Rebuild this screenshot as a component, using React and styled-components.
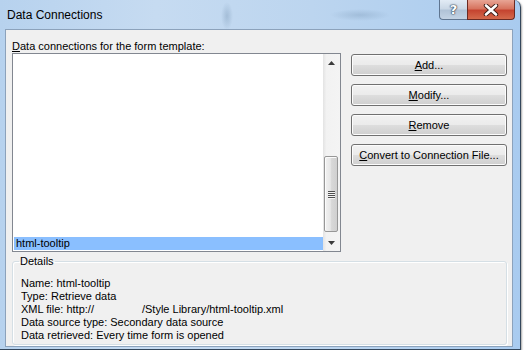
import React from "react"
import styled, { createGlobalStyle } from "styled-components"

const GlobalStyle = createGlobalStyle`
  html, body {
    margin: 0;
    padding: 0;
    background: #ffffff;
  }
  body {
    font-family: "Liberation Sans", Arial, sans-serif;
    font-size: 11px;
    color: #000;
  }
`

const details = [
  "Name: html-tooltip",
  "Type: Retrieve data",
  null,
  "Data source type: Secondary data source",
  "Data retrieved: Every time form is opened",
]

const App = () => {
  return (
    <>
      <GlobalStyle />
      <Window>
        <TitleBar>
          <Title>Data Connections</Title>
          <Blur />
          <CaptionButtons>
            <HelpButton>?</HelpButton>
            <CloseButton>
              <svg width="16" height="12" viewBox="0 0 16 12">
                <path d="M3 1.5 L13 10.5 M13 1.5 L3 10.5" stroke="#3b1a14" strokeWidth="4.4" strokeLinecap="round" />
                <path d="M3 1.5 L13 10.5 M13 1.5 L3 10.5" stroke="#ffffff" strokeWidth="2.6" strokeLinecap="round" />
              </svg>
            </CloseButton>
          </CaptionButtons>
        </TitleBar>

        <Client>
          <TopRow>
            <LeftColumn>
              <Label><u>D</u>ata connections for the form template:</Label>
              <ListBox>
                <Items>
                  <Item selected>html-tooltip</Item>
                </Items>
                <ScrollBar>
                  <ArrowButton>
                    <svg width="7" height="4" viewBox="0 0 7 4">
                      <path d="M0 4 L3.5 0 L7 4 Z" fill="#3c3c3c" />
                    </svg>
                  </ArrowButton>
                  <Track>
                    <Thumb>
                      <Grip>
                        <span /><span /><span /><span />
                      </Grip>
                    </Thumb>
                  </Track>
                  <ArrowButton>
                    <svg width="7" height="4" viewBox="0 0 7 4">
                      <path d="M0 0 L7 0 L3.5 4 Z" fill="#3c3c3c" />
                    </svg>
                  </ArrowButton>
                </ScrollBar>
              </ListBox>
            </LeftColumn>

            <ButtonColumn>
              <Button><u>A</u>dd...</Button>
              <Button><u>M</u>odify...</Button>
              <Button><u>R</u>emove</Button>
              <Button><u>C</u>onvert to Connection File...</Button>
            </ButtonColumn>
          </TopRow>

          <GroupBox>
            <Legend>Details</Legend>
            <DetailText>
              {details.map((line, i) =>
                line ? (
                  <DetailLine key={i}>{line}</DetailLine>
                ) : (
                  <DetailLine key={i}>
                    XML file: http://<Hidden />/Style Library/html-tooltip.xml
                  </DetailLine>
                )
              )}
            </DetailText>
          </GroupBox>
        </Client>
      </Window>
    </>
  )
}

export default App

const Window = styled.div`
  box-sizing: border-box;
  width: 521px;
  height: 350px;
  display: flex;
  flex-direction: column;
  border-right: 1px solid #34475c;
  border-bottom: 1px solid #34475c;
  border-top-right-radius: 7px;
  box-shadow: 1px 1px 2px rgba(0, 0, 0, 0.35);
  background: linear-gradient(90deg, #b7d2ee 0%, #c6dbf1 30%, #bcd5ef 60%, #a9cbef 100%);
  position: relative;
  overflow: hidden;
`

const TitleBar = styled.div`
  height: 29px;
  display: flex;
  align-items: flex-start;
  padding-left: 7px;
  position: relative;
`

const Title = styled.div`
  padding-top: 8px;
  font-size: 12px;
  color: #000;
`

const Blur = styled.div`
  flex: 1;
  height: 29px;
  background:
    radial-gradient(ellipse 6px 14px at 125px 16px, rgba(110, 140, 170, 0.35), transparent),
    radial-gradient(ellipse 30px 6px at 258px 15px, rgba(110, 140, 170, 0.3), transparent);
`

const CaptionButtons = styled.div`
  display: flex;
  margin-right: 5px;
`

const HelpButton = styled.div`
  box-sizing: border-box;
  width: 28px;
  height: 20px;
  border: 1px solid #5f7590;
  border-top: none;
  border-right: none;
  border-bottom-left-radius: 4px;
  background: linear-gradient(180deg, #e2ebf5 0%, #cbd8e6 45%, #b1c3d7 55%, #c3d3e4 100%);
  display: flex;
  align-items: center;
  justify-content: center;
  font-family: "DejaVu Sans", sans-serif;
  font-weight: bold;
  font-size: 13px;
  color: #ffffff;
  text-shadow: 0 0 1px #2c3d52, 0 0 1px #2c3d52, 0 0 2px #2c3d52;
`

const CloseButton = styled.div`
  box-sizing: border-box;
  width: 48px;
  height: 20px;
  border: 1px solid #6b2a22;
  border-top: none;
  border-bottom-right-radius: 4px;
  background: linear-gradient(180deg, #e8a595 0%, #d7745f 45%, #c54430 55%, #d46a4c 100%);
  display: flex;
  align-items: center;
  justify-content: center;
`

const Client = styled.div`
  box-sizing: border-box;
  margin: 0 7px 0 5px;
  height: 318px;
  border: 1px solid #8ca2bb;
  background: #f0f0f0;
  padding: 10px 5px 1px 6px;
  display: flex;
  flex-direction: column;
`

const TopRow = styled.div`
  display: flex;
  gap: 10px;
`

const LeftColumn = styled.div`
  width: 329px;
  display: flex;
  flex-direction: column;
`

const Label = styled.div`
  line-height: 13px;
  height: 13px;
  white-space: nowrap;
`

const ListBox = styled.div`
  box-sizing: border-box;
  height: 199px;
  border: 1px solid #828790;
  background: #ffffff;
  display: flex;
`

const Items = styled.div`
  flex: 1;
  display: flex;
  flex-direction: column;
  justify-content: flex-end;
  padding: 0 0 1px 1px;
`

const Item = styled.div`
  height: 13px;
  line-height: 13px;
  padding-left: 2px;
  background: ${(p) => (p.selected ? "#8abfff" : "transparent")};
`

const ScrollBar = styled.div`
  width: 17px;
  display: flex;
  flex-direction: column;
  background: linear-gradient(90deg, #e3e3e3 0%, #f2f2f2 20%, #f4f4f4 100%);
`

const ArrowButton = styled.div`
  height: 17px;
  display: flex;
  align-items: center;
  justify-content: center;
`

const Track = styled.div`
  flex: 1;
  display: flex;
  flex-direction: column;
  justify-content: flex-end;
  padding: 0 2px 2px 1px;
`

const Thumb = styled.div`
  box-sizing: border-box;
  height: 76px;
  border: 1px solid #979797;
  border-radius: 2px;
  background: linear-gradient(90deg, #f2f2f2 0%, #e6e6e6 45%, #d8d8d8 55%, #d0d0d0 100%);
  box-shadow: inset 1px 1px 0 #fbfbfb;
  display: flex;
  align-items: center;
  justify-content: center;
`

const Grip = styled.div`
  display: flex;
  flex-direction: column;
  gap: 1px;

  span {
    display: block;
    width: 7px;
    height: 1px;
    background: #4f4f4f;
    box-shadow: 0 1px 0 #f5f5f5;
  }
`

const ButtonColumn = styled.div`
  width: 156px;
  padding-top: 14px;
  display: flex;
  flex-direction: column;
  gap: 8px;
`

const Button = styled.div`
  box-sizing: border-box;
  height: 22px;
  border: 1px solid #707070;
  border-radius: 3px;
  background: linear-gradient(180deg, #f2f2f2 0%, #ebebeb 48%, #dddddd 52%, #cfcfcf 100%);
  box-shadow: inset 0 0 0 1px #fcfcfc;
  display: flex;
  align-items: center;
  justify-content: center;
  white-space: nowrap;
`

const GroupBox = styled.fieldset`
  flex: 1;
  margin: 3px 0 0 0;
  padding: 0 8px;
  border: 1px solid #d5dfe5;
  border-radius: 3px;
  box-shadow: inset 1px 1px 0 #ffffff, 1px 1px 0 #ffffff;
  min-width: 0;
`

const Legend = styled.legend`
  padding: 0 1px;
  margin-left: -2px;
  line-height: 13px;
`

const DetailText = styled.div`
  padding-top: 9px;
  display: flex;
  flex-direction: column;
`

const DetailLine = styled.div`
  line-height: 13px;
  white-space: nowrap;
`

const Hidden = styled.span`
  display: inline-block;
  width: 48px;
`
